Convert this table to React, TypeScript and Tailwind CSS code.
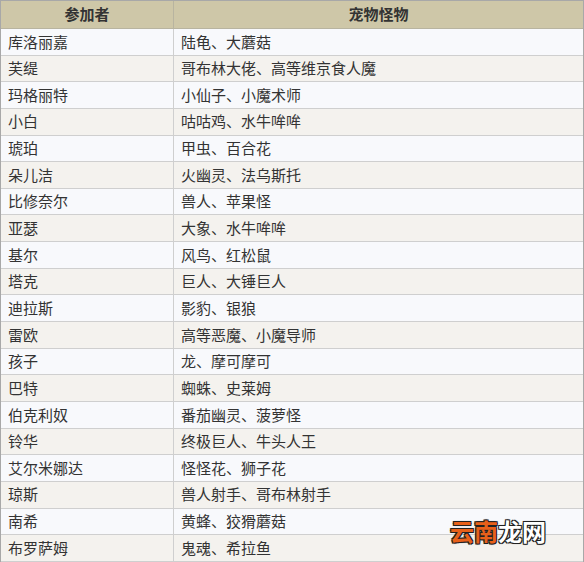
import React from "react";

const rows: [string, string][] = [
  ["库洛丽嘉", "陆龟、大蘑菇"],
  ["芙缇", "哥布林大佬、高等维京食人魔"],
  ["玛格丽特", "小仙子、小魔术师"],
  ["小白", "咕咕鸡、水牛哞哞"],
  ["琥珀", "甲虫、百合花"],
  ["朵儿洁", "火幽灵、法乌斯托"],
  ["比修奈尔", "兽人、苹果怪"],
  ["亚瑟", "大象、水牛哞哞"],
  ["基尔", "风鸟、红松鼠"],
  ["塔克", "巨人、大锤巨人"],
  ["迪拉斯", "影豹、银狼"],
  ["雷欧", "高等恶魔、小魔导师"],
  ["孩子", "龙、摩可摩可"],
  ["巴特", "蜘蛛、史莱姆"],
  ["伯克利奴", "番茄幽灵、菠萝怪"],
  ["铃华", "终极巨人、牛头人王"],
  ["艾尔米娜达", "怪怪花、狮子花"],
  ["琼斯", "兽人射手、哥布林射手"],
  ["南希", "黄蜂、狡猾蘑菇"],
  ["布罗萨姆", "鬼魂、希拉鱼"],
];

export default function App() {
  return (
    <div
      className="relative w-[584px] h-[562px] overflow-hidden bg-white text-[#333] text-[15px]"
      style={{ fontFamily: '"Noto Sans CJK SC", "Noto Sans", sans-serif' }}
    >
      <div className="border border-[#a8a8a8] h-[562px] flex flex-col">
        <div className="flex h-[28px] shrink-0 bg-[#cec7a8] border-b border-[#b8b4a0] font-bold">
          <div className="w-[173px] shrink-0 border-r border-[#b8b4a0] flex items-center justify-center">
            参加者
          </div>
          <div className="flex-1 flex items-center justify-center">宠物怪物</div>
        </div>
        {rows.map(([a, b], i) => (
          <div
            key={i}
            className={
              "flex h-[26.65px] shrink-0 border-b border-[#cfcfcf] " +
              (i % 2 === 0 ? "bg-[#f8f9fc]" : "bg-[#f4f2ee]")
            }
          >
            <div className="w-[173px] shrink-0 border-r border-[#cfcfcf] flex items-center pl-[7px]">
              {a}
            </div>
            <div className="flex-1 flex items-center pl-[7px]">{b}</div>
          </div>
        ))}
      </div>
      <div className="absolute left-[450px] top-[519px] text-[24px] font-bold leading-none">
        <span className="text-[#e8601a] [text-shadow:0_0_2px_#222,1px_1px_0_#222,-1px_-1px_0_#222,1px_-1px_0_#222,-1px_1px_0_#222]">云南</span>
        <span className="text-white [text-shadow:0_0_2px_#222,1px_1px_0_#222,-1px_-1px_0_#222,1px_-1px_0_#222,-1px_1px_0_#222]">龙网</span>
      </div>
    </div>
  );
}
